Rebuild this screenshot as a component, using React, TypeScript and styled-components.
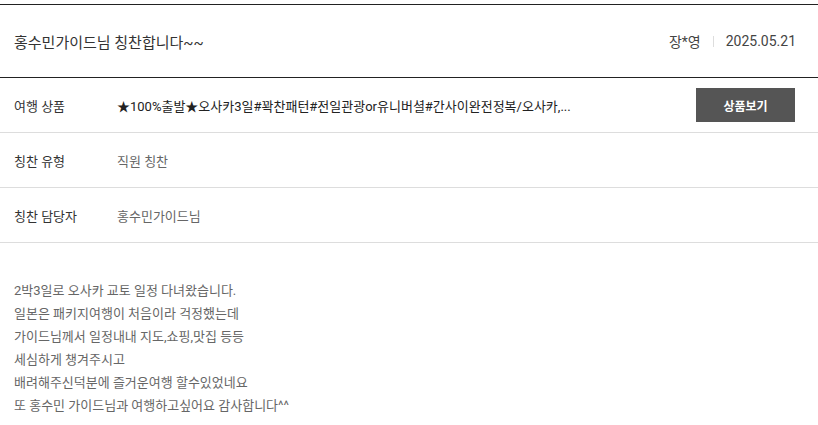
import React from 'react';
import styled, { createGlobalStyle } from 'styled-components';

const GlobalStyle = createGlobalStyle`
  body {
    margin: 0;
    background: #fff;
    font-family: Roboto, 'Noto Sans CJK KR', sans-serif;
  }
`;

const Wrapper = styled.div`
  padding-top: 4px;
`;

const Header = styled.div`
  display: flex;
  align-items: center;
  justify-content: space-between;
  height: 72px;
  padding: 0 22px 0 14px;
  border-top: 1px solid #222;
  border-bottom: 1px solid #222;
`;

const Title = styled.h2`
  margin: 0;
  font-size: 15px;
  font-weight: 400;
  color: #333;
`;

const Meta = styled.div`
  display: flex;
  align-items: center;
  font-size: 14px;
  color: #444;
`;

const Divider = styled.span`
  width: 1px;
  height: 11px;
  margin: 0 12px;
  background: #ddd;
`;

const Row = styled.div`
  display: flex;
  align-items: center;
  height: 54px;
  padding: 0 23px 0 14px;
  border-bottom: 1px solid #ddd;
`;

const Label = styled.div`
  width: 103px;
  flex-shrink: 0;
  font-size: 13px;
  color: #333;
`;

const Value = styled.div<{ $strong?: boolean }>`
  flex: 1;
  min-width: 0;
  font-size: 13px;
  color: ${({ $strong }) => ($strong ? '#222' : '#666')};
  white-space: nowrap;
  overflow: hidden;
  text-overflow: ellipsis;
`;

const ViewButton = styled.button`
  width: 99px;
  height: 34px;
  margin-left: 20px;
  border: none;
  background: #555;
  color: #fff;
  font-family: inherit;
  font-size: 12px;
  font-weight: 700;
  cursor: pointer;
`;

const Content = styled.div`
  padding: 36px 14px 10px;
  font-size: 13px;
  line-height: 23px;
  color: #666;
`;

const rows = [
  { label: '칭찬 유형', value: '직원 칭찬' },
  { label: '칭찬 담당자', value: '홍수민가이드님' }
];

const lines = [
  '2박3일로 오사카 교토 일정 다녀왔습니다.',
  '일본은 패키지여행이 처음이라 걱정했는데',
  '가이드님께서 일정내내 지도,쇼핑,맛집 등등',
  '세심하게 챙겨주시고',
  '배려해주신덕분에 즐거운여행 할수있었네요',
  '또 홍수민 가이드님과 여행하고싶어요 감사합니다^^'
];

const App = () => (
  <Wrapper>
    <GlobalStyle />
    <Header>
      <Title>홍수민가이드님 칭찬합니다~~</Title>
      <Meta>
        <span>장*영</span>
        <Divider />
        <span>2025.05.21</span>
      </Meta>
    </Header>
    <Row>
      <Label>여행 상품</Label>
      <Value $strong>
        ★100%출발★오사카3일#꽉찬패턴#전일관광or유니버셜#간사이완전정복/오사카,...
      </Value>
      <ViewButton>상품보기</ViewButton>
    </Row>
    {rows.map((row) => (
      <Row key={row.label}>
        <Label>{row.label}</Label>
        <Value>{row.value}</Value>
      </Row>
    ))}
    <Content>
      {lines.map((line, index) => (
        <div key={index}>{line}</div>
      ))}
    </Content>
  </Wrapper>
);

export default App;
